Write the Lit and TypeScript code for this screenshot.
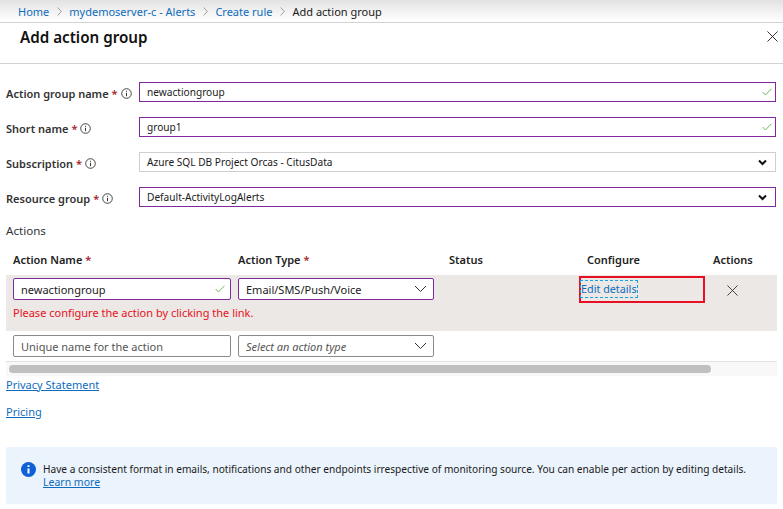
import { LitElement, html, css, svg } from "lit";
import { customElement } from "lit/decorators.js";

const check = svg`<svg class="chk" width="10" height="8" viewBox="0 0 10 8"><path d="M.7 4 L3.4 7 L9.5 .7" fill="none" stroke="#6cb85a" stroke-width="1"/></svg>`;
const boldChev = svg`<svg width="9" height="7" viewBox="0 0 9 7"><path d="M1 1.5 L4.5 5 L8 1.5" fill="none" stroke="#111" stroke-width="2"/></svg>`;
const thinChev = svg`<svg width="13" height="8" viewBox="0 0 13 8"><path d="M1 1 L6.5 6.5 L12 1" fill="none" stroke="#333" stroke-width="1"/></svg>`;
const info = svg`<svg class="i" width="11" height="11" viewBox="0 0 11 11"><circle cx="5.5" cy="5.5" r="4.8" fill="none" stroke="#333" stroke-width=".9"/><path d="M5.5 4.8V8.2M5.5 2.8V3.8" stroke="#333" stroke-width="1"/></svg>`;
const cross = (s: number, c: string) => svg`<svg width="${s}" height="${s}" viewBox="0 0 12 12"><path d="M.5 .5 L11.5 11.5 M11.5 .5 L.5 11.5" stroke="${c}" stroke-width="1"/></svg>`;
const sep = svg`<svg class="sep" width="5" height="9" viewBox="0 0 5 9"><path d="M.6 .5 L4.4 4.5 L.6 8.5" fill="none" stroke="#8a8a8a" stroke-width=".8"/></svg>`;

@customElement("app-root")
export class AppRoot extends LitElement {
  static styles = css`
    :host { display: block; width: 783px; height: 509px; overflow: hidden; background: #fff; color: #1a1a1a;
      font-family: "Noto Sans", "Open Sans", sans-serif; font-size: 11px; }
    a { color: #0f6cbd; }
    .crumbs { height: 22px; border-bottom: 1px solid #d2d2d2; display: flex; align-items: center; gap: 7.5px; padding-left: 18px;
      background: linear-gradient(#e2e2e2 0, #f6f6f6 14px, #fff 22px); }
    .crumbs a { text-decoration: none; }
    .head { height: 40px; border-bottom: 1px solid #d2d2d2; display: flex; justify-content: space-between; padding: 0 5px 0 20px; }
    .head h1 { margin: 4px 0 0; font-size: 15.2px; line-height: 20px; font-weight: 600; color: #111; }
    .head svg { margin-top: 8px; }
    .form { padding: 18px 7px 0 6px; display: grid; grid-template-columns: 133px 1fr; row-gap: 15px; }
    .lab { display: flex; align-items: center; gap: 3px; font-weight: 600; color: #333; height: 20px; padding-top: 3px; box-sizing: border-box; white-space: nowrap; }
    .req { color: #a4262c; font-weight: 600; }
    .i { flex: none; }
    .field { height: 20px; box-sizing: border-box; border: 1px solid #7f2a9c; display: flex; align-items: center; justify-content: space-between; padding: 0 3px 0 7px; font-size: 10.15px; }
    .field.plain { border-color: #cfcfcf; }
    .field.sel { padding-right: 8px; }
    .alabel { margin: 16px 0 0 6px; line-height: 16px; font-size: 11.6px; color: #333; }
    .grid { display: grid; align-content: start; grid-template-columns: 225px 211px 130px 126px 72px; margin-left: 6px; width: 771px; padding-left: 7px; box-sizing: border-box; }
    .thead { height: 32px; margin-top: 4px; align-content: center; font-weight: 600; color: #222; }
    .thead .pad { padding-left: 8px; }
    .row { background: #ebe8e5; height: 56px; padding-top: 3px; }
    .tf { height: 22px; box-sizing: border-box; border: 1px solid #7f2a9c; border-radius: 2px; background: #fff; display: flex; align-items: center; justify-content: space-between; padding: 0 5px 0 7px; width: 218px; }
    .tf.ty { width: 196px; padding-right: 6px; }
    .tf.off { border-color: #8a8a8a; color: #555; }
    em { color: #555; }
    .err { grid-column: 1 / 3; color: #e81123; margin-top: 5px; line-height: 16px; white-space: nowrap; }
    .red { border: 2px solid #e81123; height: 27px; box-sizing: border-box; margin: -2px 0 -3px; padding-top: 2px; }
    .dash { display: block; width: max-content; margin-left: -1px; border: 1px dashed #1aa3e0; color: #0f6cbd; line-height: 16px; font-size: 10.8px; }
    .x { padding: 6px 0 0 22px; height: 16px; }
    .row2 { height: 31px; padding-top: 4px; border-bottom: 1px solid #e2e2e2; }
    .scroll { margin-left: 6px; width: 771px; height: 14px; background: #f8f8f8; display: flex; align-items: center; padding-left: 3px; box-sizing: border-box; }
    .thumb { width: 702px; height: 8px; border-radius: 4px; background: #c0c0c0; }
    .links { margin: 1px 0 0 6px; display: flex; flex-direction: column; gap: 11px; line-height: 16px; align-items: flex-start; }
    .banner { margin: 27px 0 0 6px; width: 771px; height: 57px; box-sizing: border-box; background: #ebf3fc; border-radius: 2px; display: flex; gap: 7px; padding: 16px 0 0 15px; line-height: 13px; font-size: 10.13px; }
    .banner svg { margin-top: -1px; flex: none; }
    .banner a { font-size: 10.5px; }
  `;
  render() {
    const lab = (t: string) => html`<div class="lab">${t} <span class="req">*</span>${info}</div>`;
    return html`
      <nav class="crumbs"><a>Home</a>${sep}<a>mydemoserver-c - Alerts</a>${sep}<a>Create rule</a>${sep}<span>Add action group</span></nav>
      <header class="head"><h1>Add action group</h1>${cross(11, "#222")}</header>
      <section class="form">
        ${lab("Action group name")}<div class="field"><span>newactiongroup</span>${check}</div>
        ${lab("Short name")}<div class="field"><span>group1</span>${check}</div>
        ${lab("Subscription")}<div class="field plain sel"><span>Azure SQL DB Project Orcas - CitusData</span>${boldChev}</div>
        ${lab("Resource group")}<div class="field sel"><span>Default-ActivityLogAlerts</span>${boldChev}</div>
      </section>
      <div class="alabel">Actions</div>
      <div class="grid thead">
        <div>Action Name <span class="req">*</span></div><div>Action Type <span class="req">*</span></div>
        <div>Status</div><div class="pad">Configure</div><div class="pad">Actions</div>
      </div>
      <div class="grid row">
        <div class="tf"><span>newactiongroup</span>${check}</div>
        <div class="tf ty"><span>Email/SMS/Push/Voice</span>${thinChev}</div>
        <div></div>
        <div class="red"><span class="dash">Edit details</span></div>
        <div class="x">${cross(11, "#333")}</div>
        <div class="err">Please configure the action by clicking the link.</div>
      </div>
      <div class="grid row2">
        <div class="tf off"><span>Unique name for the action</span></div>
        <div class="tf ty off"><em>Select an action type</em>${thinChev}</div>
      </div>
      <div class="scroll"><div class="thumb"></div></div>
      <div class="links"><a href="#">Privacy Statement</a><a href="#">Pricing</a></div>
      <aside class="banner">
        <svg width="15" height="15" viewBox="0 0 15 15"><circle cx="7.5" cy="7.5" r="7.5" fill="#0f5fd7"/><path d="M7.5 6.5V11.5M7.5 3.2V5" stroke="#fff" stroke-width="2"/></svg>
        <div>Have a consistent format in emails, notifications and other endpoints irrespective of monitoring source. You can enable per action by editing details.<br><a href="#">Learn more</a></div>
      </aside>
    `;
  }
}
